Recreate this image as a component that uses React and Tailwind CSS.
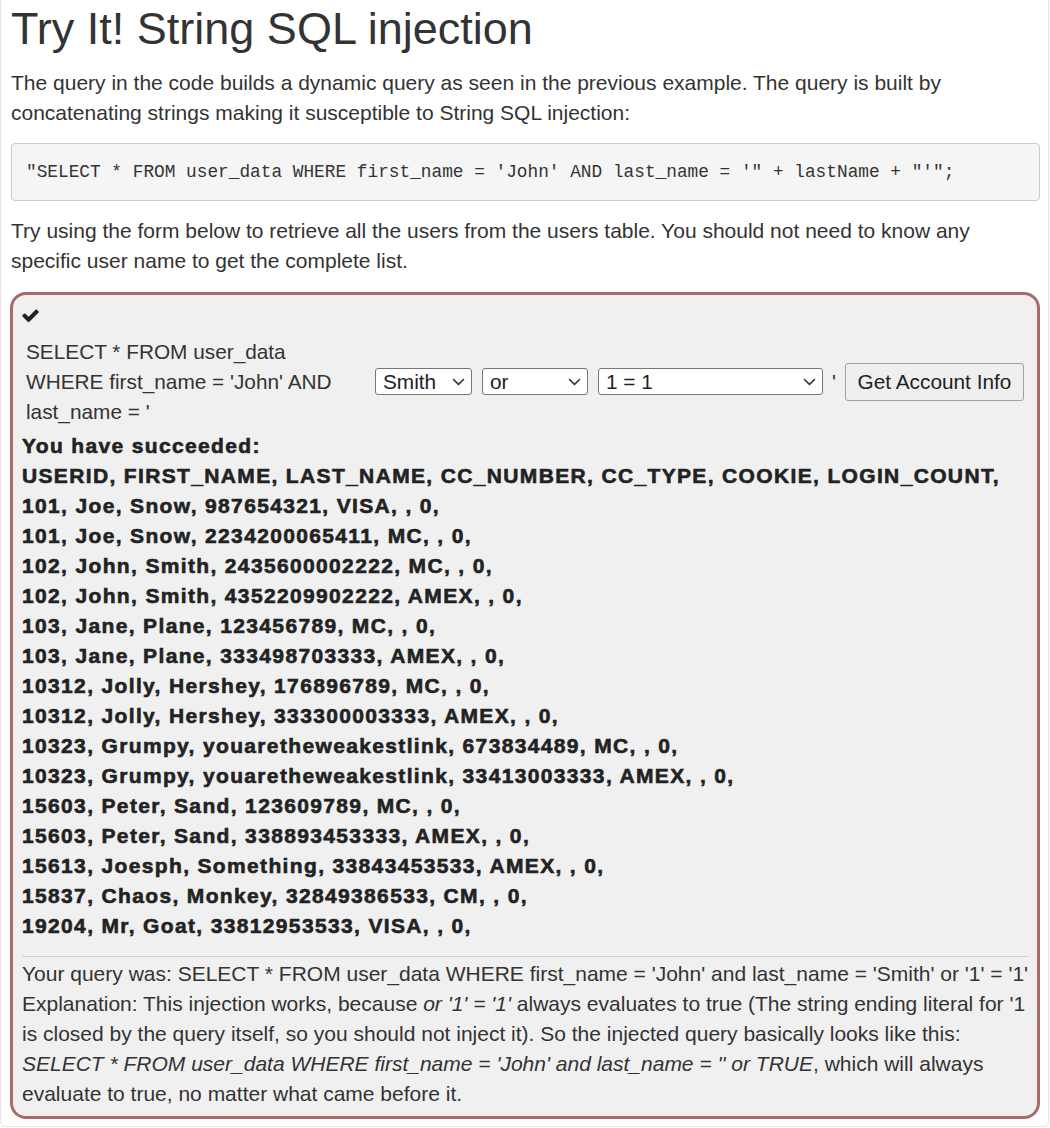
import React from 'react';

const rows = [
  'USERID, FIRST_NAME, LAST_NAME, CC_NUMBER, CC_TYPE, COOKIE, LOGIN_COUNT,',
  '101, Joe, Snow, 987654321, VISA, , 0,',
  '101, Joe, Snow, 2234200065411, MC, , 0,',
  '102, John, Smith, 2435600002222, MC, , 0,',
  '102, John, Smith, 4352209902222, AMEX, , 0,',
  '103, Jane, Plane, 123456789, MC, , 0,',
  '103, Jane, Plane, 333498703333, AMEX, , 0,',
  '10312, Jolly, Hershey, 176896789, MC, , 0,',
  '10312, Jolly, Hershey, 333300003333, AMEX, , 0,',
  '10323, Grumpy, youaretheweakestlink, 673834489, MC, , 0,',
  '10323, Grumpy, youaretheweakestlink, 33413003333, AMEX, , 0,',
  '15603, Peter, Sand, 123609789, MC, , 0,',
  '15603, Peter, Sand, 338893453333, AMEX, , 0,',
  '15613, Joesph, Something, 33843453533, AMEX, , 0,',
  '15837, Chaos, Monkey, 32849386533, CM, , 0,',
  '19204, Mr, Goat, 33812953533, VISA, , 0,',
];

const Chevron = () => (
  <svg
    className="absolute right-[7px] top-1/2 -translate-y-1/2 pointer-events-none"
    width="13"
    height="8"
    viewBox="0 0 13 8"
    fill="none"
  >
    <path d="M1.5 1.5 L6.5 6.3 L11.5 1.5" stroke="#333" strokeWidth="1.6" strokeLinecap="round" strokeLinejoin="round" />
  </svg>
);

const Select = ({ width, options }) => (
  <div className="relative shrink-0">
    <select
      defaultValue={options[0]}
      className={`${width} h-[27px] appearance-none bg-white border border-[#767676] rounded-[3px] pl-[7px] text-[20.8px] leading-[25px] text-[#222] outline-none`}
    >
      {options.map((o) => (
        <option key={o} value={o}>{o}</option>
      ))}
    </select>
    <Chevron />
  </div>
);

const CheckIcon = () => (
  <svg width="19" height="19" viewBox="0 0 1792 1792" className="-ml-[1px]">
    <path
      fill="#222"
      d="M1671 566q0 40-28 68l-724 724-136 136q-28 28-68 28t-68-28l-136-136-362-362q-28-28-28-68t28-68l136-136q28-28 68-28t68 28l294 295 656-657q28-28 68-28t68 28l136 136q28 28 28 68z"
    />
  </svg>
);

export default function App() {
  return (
    <div className="bg-white min-h-[1128px] font-['Liberation_Sans',Arial,sans-serif] text-[#333]">
      <div className="w-[1049px] border-x border-b border-[#e6e6e6] rounded-b-[6px] pl-[10px] pr-[8px] pt-[4px] pb-[7px]">
        <h2 className="text-[45px] leading-[49px] font-normal text-[#333] mb-[15px]">
          Try It! String SQL injection
        </h2>
        <p className="text-[21px] leading-[30px] mb-[15px]">
          The query in the code builds a dynamic query as seen in the previous example. The query is built by
          concatenating strings making it susceptible to String SQL injection:
        </p>
        <pre className="bg-[#f5f5f5] border border-[#cccccc] rounded-[4px] px-[14px] py-[14px] font-['Liberation_Mono',monospace] text-[17.8px] leading-[28px] text-[#333] mb-[15px]">
          "SELECT * FROM user_data WHERE first_name = 'John' AND last_name = '" + lastName + "'";
        </pre>
        <p className="text-[21px] leading-[30px] mb-[16px]">
          Try using the form below to retrieve all the users from the users table. You should not need to know any
          specific user name to get the complete list.
        </p>

        <div className="-ml-px w-[1030px] bg-[#f0f0f0] border-[3px] border-[#a86b6c] rounded-[16px] pl-[9px] pr-[6px] pt-[5px] pb-[7px]">
          <div className="h-[30px] flex items-center">
            <CheckIcon />
          </div>

          <div className="mt-[7px] flex items-center">
            <div className="w-[320px] ml-[4px] text-[20.8px] leading-[30px]">
              SELECT * FROM user_data WHERE first_name = 'John' AND last_name = '
            </div>
            <div className="ml-[29px] flex items-center gap-[10px]">
              <Select width="w-[97px]" options={['Smith', "'Smith", "'"]} />
              <Select width="w-[106px]" options={['or', 'and']} />
              <Select width="w-[225px]" options={['1 = 1', "'1' = '1", "'1' = '2"]} />
            </div>
            <span className="ml-[9px] text-[20.8px]">'</span>
            <button className="ml-[9px] h-[38px] w-[179px] bg-[#efefef] border border-[#a0a0a0] rounded-[3px] text-[20.8px] text-[#222]">
              Get Account Info
            </button>
          </div>

          <div className="mt-[4px] font-bold text-[21px] leading-[30px] tracking-[1.35px] text-[#222] [-webkit-text-stroke:0.6px_#222]">
            <div>You have succeeded:</div>
            {rows.map((r, i) => (
              <div key={i} className="whitespace-nowrap">{r}</div>
            ))}
          </div>

          <div className="mt-[15px] mr-[2px] border-t border-[#cfcfcf]" />

          <div className="mt-[2px] text-[21px] leading-[30px] text-[#333] whitespace-nowrap">
            <div>
              Your query was: SELECT * FROM user_data WHERE first_name = 'John' and last_name = 'Smith' or '1' = '1'
            </div>
            <div>
              Explanation: This injection works, because <i>or '1' = '1'</i> always evaluates to true (The string
              ending literal for '1
              <br />
              is closed by the query itself, so you should not inject it). So the injected query basically looks like
              this:
              <br />
              <i>SELECT * FROM user_data WHERE first_name = 'John' and last_name = '' or TRUE</i>, which will always
              <br />
              evaluate to true, no matter what came before it.
            </div>
          </div>
        </div>
      </div>
    </div>
  );
}
